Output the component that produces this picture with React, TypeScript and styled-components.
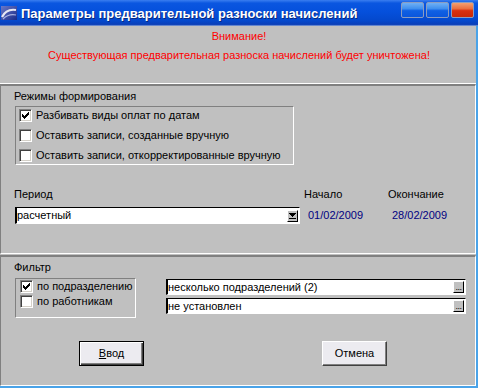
import React from 'react';
import styled, { createGlobalStyle } from 'styled-components';

const Global = createGlobalStyle`
  html, body { margin: 0; padding: 0; background: #c0c0c0; }
  body { font-family: "Liberation Sans", Arial, sans-serif; font-size: 11px; color: #000; }
  * { box-sizing: border-box; }
`;

const Window = styled.div`
  width: 478px;
  height: 388px;
  display: flex;
  flex-direction: column;
  background: #c0c0c0;
  overflow: hidden;
`;

const TitleBar = styled.div`
  height: 26px;
  flex: none;
  display: flex;
  align-items: center;
  padding: 0 4px 0 1px;
  background: linear-gradient(to bottom, #3a7ef0 0%, #0a56e0 12%, #0550dc 45%, #0448cc 80%, #0a3fb8 94%, #8fa8d8 100%);
`;

const TitleText = styled.div`
  flex: 1;
  margin-left: 3px;
  color: #fff;
  font-weight: bold;
  font-size: 13px;
  letter-spacing: 0;
  white-space: nowrap;
  text-shadow: 1px 1px 0 #0a2a80;
`;

const WinButtons = styled.div`
  display: flex;
  gap: 2px;
  margin-top: -6px;
`;

const WinButton = styled.div<{ $red?: boolean }>`
  width: 23px;
  height: 16px;
  border-radius: 2px;
  border: 1px solid #8a9cc0;
  background: ${(p) =>
    p.$red
      ? 'linear-gradient(to bottom, #f3a070 0%, #ea7040 40%, #d83010 55%, #c82808 100%)'
      : 'linear-gradient(to bottom, #70b0f4 0%, #4090ee 40%, #1060e4 55%, #0a56dc 100%)'};
`;

const Body = styled.div`
  flex: 1;
  display: flex;
  flex-direction: column;
  border-right: 2px solid #4aa3e8;
  border-bottom: 2px solid #4aa3e8;
`;

const Warning = styled.div`
  height: 58px;
  flex: none;
  display: flex;
  flex-direction: column;
  align-items: center;
  gap: 6px;
  padding-top: 4px;
  padding-left: 2px;
  border-bottom: 1px solid #fff;
  color: #ff0000;
  line-height: 13px;
`;

const Panel = styled.div<{ $h: number }>`
  height: ${(p) => p.$h}px;
  flex: none;
  display: flex;
  flex-direction: column;
  padding: 4px 0 0 14px;
  border-top: 2px solid #808080;
  border-left: 1px solid #808080;
  border-right: 1px solid #fff;
  border-bottom: 1px solid #fff;
`;

const Gap = styled.div`
  height: 1px;
  flex: none;
`;

const Label = styled.div`
  line-height: 13px;
  margin-left: -1px;
  white-space: nowrap;
`;

const GroupBox = styled.div<{ $w: number; $pad: string; $gap: number }>`
  width: ${(p) => p.$w}px;
  display: flex;
  flex-direction: column;
  gap: ${(p) => p.$gap}px;
  padding: ${(p) => p.$pad};
  border-top: 1px solid #808080;
  border-left: 1px solid #808080;
  border-right: 1px solid #fff;
  border-bottom: 1px solid #fff;
`;

const CheckRow = styled.label`
  display: flex;
  align-items: center;
  gap: 4px;
  height: 13px;
  line-height: 13px;
  white-space: nowrap;
`;

const Box = styled.span`
  width: 13px;
  height: 13px;
  flex: none;
  display: block;
  background: #fff;
  border-top: 1px solid #808080;
  border-left: 1px solid #808080;
  border-right: 1px solid #fff;
  border-bottom: 1px solid #fff;
  box-shadow: inset 1px 1px 0 #404040, inset -1px -1px 0 #d4d0c8;
`;

const checkPixels: [number, number][] = [
  [6, 0], [5, 1], [6, 1], [0, 2], [4, 2], [5, 2], [6, 2],
  [0, 3], [1, 3], [3, 3], [4, 3], [5, 3],
  [0, 4], [1, 4], [2, 4], [3, 4], [4, 4],
  [1, 5], [2, 5], [3, 5], [2, 6],
];

const CheckMark = () => (
  <svg width="11" height="11" viewBox="0 0 11 11" shapeRendering="crispEdges">
    {checkPixels.map(([x, y]) => (
      <rect key={`${x}-${y}`} x={x + 2} y={y + 2} width="1" height="1" fill="#000" />
    ))}
  </svg>
);

const Check = ({ checked, text }: { checked?: boolean; text: string }) => (
  <CheckRow>
    <Box>{checked && <CheckMark />}</Box>
    <span>{text}</span>
  </CheckRow>
);

const ModesBox = styled(GroupBox)`
  margin-top: 3px;
`;

const PeriodGrid = styled.div`
  margin-top: 23px;
  display: grid;
  grid-template-columns: 290px 84px auto;
  row-gap: 6px;
  align-items: center;
`;

const Field = styled.div<{ $w: number; $h: number }>`
  width: ${(p) => p.$w}px;
  height: ${(p) => p.$h}px;
  display: flex;
  align-items: center;
  background: #fff;
  border-top: 1px solid #000;
  border-left: 2px solid #000;
  border-right: 1px solid #fff;
  border-bottom: 1px solid #fff;
  padding-right: 1px;
`;

const FieldText = styled.span`
  flex: 1;
  line-height: 13px;
  white-space: nowrap;
`;

const SmallBtn = styled.div`
  width: 11px;
  height: 12px;
  flex: none;
  display: flex;
  align-items: center;
  justify-content: center;
  background: #c0c0c0;
  border-top: 1px solid #fff;
  border-left: 1px solid #fff;
  border-right: 1px solid #000;
  border-bottom: 1px solid #000;
  font-size: 9px;
  line-height: 9px;
  letter-spacing: -0.5px;
`;

const DateText = styled.div`
  color: #000080;
  padding-left: 3px;
  line-height: 13px;
`;

const FilterRow = styled.div`
  margin-top: 4px;
  display: flex;
`;

const Edits = styled.div`
  margin: 1px 0 0 30px;
  display: flex;
  flex-direction: column;
  gap: 3px;
`;

const ButtonRow = styled.div`
  margin-top: 23px;
  padding-left: 64px;
  display: flex;
  gap: 178px;
`;

const Button = styled.div<{ $default?: boolean }>`
  width: 65px;
  height: 25px;
  display: flex;
  align-items: center;
  justify-content: center;
  background: #ecebf0;
  border: 1px solid ${(p) => (p.$default ? '#000' : '#fff')};
  ${(p) =>
    p.$default
      ? 'box-shadow: inset 1px 1px 0 #fff, inset -1px -1px 0 #404040, inset -2px -2px 0 #808080;'
      : 'border-right-color: #404040; border-bottom-color: #404040; box-shadow: inset -1px -1px 0 #808080;'}
  line-height: 13px;
`;

const AppIcon = () => (
  <svg width="17" height="16" viewBox="0 0 17 16">
    <defs>
      <linearGradient id="ig" x1="0" y1="0" x2="1" y2="1">
        <stop offset="0" stopColor="#6a78c8" />
        <stop offset="1" stopColor="#1a2a88" />
      </linearGradient>
    </defs>
    <rect x="0" y="1" width="16" height="14" fill="url(#ig)" />
    <path d="M1 12 C4 6, 9 4, 15 5" stroke="#e8e8f4" strokeWidth="2.2" fill="none" />
    <path d="M2 14 C6 10, 10 9, 15 10" stroke="#a8b0e0" strokeWidth="1.2" fill="none" />
  </svg>
);

const DropGlyph = () => (
  <svg width="7" height="8" viewBox="0 0 7 8" shapeRendering="crispEdges">
    <path d="M0 1 H7 L3.5 5 Z" fill="#000" />
    <rect x="0" y="6" width="7" height="1" fill="#000" />
  </svg>
);

export default function App() {
  return (
    <>
      <Global />
      <Window>
        <TitleBar>
          <AppIcon />
          <TitleText>Параметры предварительной разноски начислений</TitleText>
          <WinButtons>
            <WinButton />
            <WinButton />
            <WinButton $red />
          </WinButtons>
        </TitleBar>
        <Body>
          <Warning>
            <div>Внимание!</div>
            <div>Существующая предварительная разноска начислений будет уничтожена!</div>
          </Warning>
          <Panel $h={170}>
            <Label>Режимы формирования</Label>
            <ModesBox $w={279} $pad="2px 3px 2px 3px" $gap={7}>
              <Check checked text="Разбивать виды оплат по датам" />
              <Check text="Оставить записи, созданные вручную" />
              <Check text="Оставить записи, откорректированные вручную" />
            </ModesBox>
            <PeriodGrid>
              <Label>Период</Label>
              <Label>Начало</Label>
              <Label>Окончание</Label>
              <Field $w={285} $h={17}>
                <FieldText>расчетный</FieldText>
                <SmallBtn>
                  <DropGlyph />
                </SmallBtn>
              </Field>
              <DateText>01/02/2009</DateText>
              <DateText>28/02/2009</DateText>
            </PeriodGrid>
          </Panel>
          <Gap />
          <Panel $h={131}>
            <Label>Фильтр</Label>
            <FilterRow>
              <GroupBox $w={121} $pad="1px 3px 9px 4px" $gap={2}>
                <Check checked text="по подразделению" />
                <Check text="по работникам" />
              </GroupBox>
              <Edits>
                <Field $w={300} $h={16}>
                  <FieldText>несколько подразделений (2)</FieldText>
                  <SmallBtn>...</SmallBtn>
                </Field>
                <Field $w={300} $h={16}>
                  <FieldText>не установлен</FieldText>
                  <SmallBtn>...</SmallBtn>
                </Field>
              </Edits>
            </FilterRow>
            <ButtonRow>
              <Button $default>
                <span>
                  <u>В</u>вод
                </span>
              </Button>
              <Button>Отмена</Button>
            </ButtonRow>
          </Panel>
        </Body>
      </Window>
    </>
  );
}
